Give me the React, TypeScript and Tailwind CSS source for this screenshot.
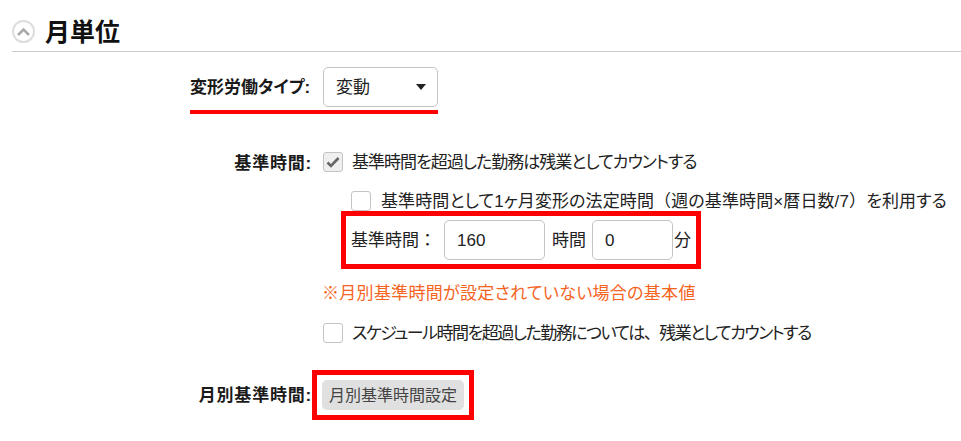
const font = "font-['Liberation_Sans','Noto_Sans_CJK_JP',sans-serif] [font-feature-settings:'palt']";

function Wide({ children }: { children: string }) {
    return <span className="[font-feature-settings:normal]">{children}</span>;
}

function Check({ checked = false }: { checked?: boolean }) {
    return (
        <span className={`flex h-5 w-5 flex-shrink-0 items-center justify-center rounded-[3px] border border-[#c4c4c4] ${checked ? 'bg-[#efefef]' : 'bg-white'}`}>
            {checked && (
                <svg width="14" height="12" viewBox="0 0 14 12">
                    <path d="M1.5 6.5 L5 10 L12.5 2" fill="none" stroke="#666" strokeWidth="2.6" />
                </svg>
            )}
        </span>
    );
}

function Label({ children }: { children: string }) {
    return <div className="w-[312px] flex-shrink-0 pt-[2px] text-right text-[17px] font-bold leading-5 tracking-[0.8px] text-[#1a1a1a]">{children}</div>;
}

export default function App() {
    return (
        <div className={`${font} h-[441px] w-[961px] overflow-hidden bg-white pl-[12px] text-[17px] text-[#222]`}>
            <div className="flex h-[52px] items-center gap-[10px] border-b border-[#ccc] pt-[12px]">
                <span className="flex h-[23px] w-[23px] items-center justify-center rounded-full border-2 border-[#ddd]">
                    <svg width="15" height="10" viewBox="0 0 15 10">
                        <path d="M2 8 L7.5 2.5 L13 8" fill="none" stroke="#aaa" strokeWidth="2.6" />
                    </svg>
                </span>
                <h2 className="text-[25px] font-bold leading-8 text-[#111]">月単位</h2>
            </div>

            <div className="ml-[178px] mt-[15px] flex w-[248px] items-center justify-between border-b-4 border-[#f00] pb-[3px]">
                <span className="whitespace-nowrap pt-[2px] font-bold leading-5 text-[#1a1a1a]">変形労働タイプ:</span>
                <div className="flex h-[40px] w-[115px] items-center justify-between rounded-[5px] border border-[#c4c4c4] pl-[12px] pr-[11px]">
                    <span className="pt-[2px]">変動</span>
                    <svg width="10" height="6" viewBox="0 0 10 6"><path d="M0 0 H10 L5 6 Z" fill="#222" /></svg>
                </div>
            </div>

            <div className="-ml-[12px] mt-[38px] flex">
                <Label>基準時間:</Label>
                <div className="ml-[11px] flex flex-col">
                    <div className="flex h-5 items-center gap-[9px] leading-5">
                        <Check checked />
                        <span className="pt-[2px] tracking-[-1px]">基準時間を超過した勤務は残業としてカウントする</span>
                    </div>
                    <div className="ml-[28px] mt-[19px] flex h-5 items-center gap-[10px] whitespace-nowrap leading-5">
                        <Check />
                        <span className="pt-[2px] tracking-[0.11px]">
                            基準時間として1ヶ月変形の法定時間<Wide>{'\uFF08'}</Wide>週の基準時間×暦日数/7<Wide>{'\uFF09'}</Wide>を利用する
                        </span>
                    </div>
                    <div className="ml-[18px] flex h-[58px] w-[360px] items-center border-[5px] border-[#f00] pl-[5px]">
                        <span className="w-[93px] flex-shrink-0 whitespace-nowrap pt-[2px]">基準時間<Wide>{'\uFF1A'}</Wide></span>
                        <div className="flex h-[40px] w-[101px] flex-shrink-0 items-center rounded-[5px] border border-[#c4c4c4] pl-[12px] pt-[1px]">160</div>
                        <span className="ml-[7px] w-[40px] flex-shrink-0 whitespace-nowrap pt-[2px]">時間</span>
                        <div className="flex h-[40px] w-[81px] flex-shrink-0 items-center rounded-[5px] border border-[#c4c4c4] pl-[12px] pt-[1px]">0</div>
                        <span className="ml-[1px] pt-[2px]">分</span>
                    </div>
                    <div className="-ml-[1px] mt-[14px] whitespace-nowrap pt-[1px] leading-5 tracking-[0.3px] text-[#f5641e]">※月別基準時間が設定されていない場合の基本値</div>
                    <div className="mt-[19px] flex h-5 items-center gap-[9px] leading-5">
                        <Check />
                        <span className="pt-[2px] tracking-[-1.52px]">スケジュール時間を超過した勤務については<Wide>、</Wide>残業としてカウントする</span>
                    </div>
                </div>
            </div>

            <div className="-ml-[12px] mt-[27px] flex items-center">
                <Label>月別基準時間:</Label>
                <div className="border-[5px] border-[#f00] p-[5px]">
                    <div className="flex h-[30px] w-[142px] items-center justify-center rounded-[5px] bg-[#e0e0e0] pt-[1px] text-[16px] text-[#444]">月別基準時間設定</div>
                </div>
            </div>
        </div>
    );
}
